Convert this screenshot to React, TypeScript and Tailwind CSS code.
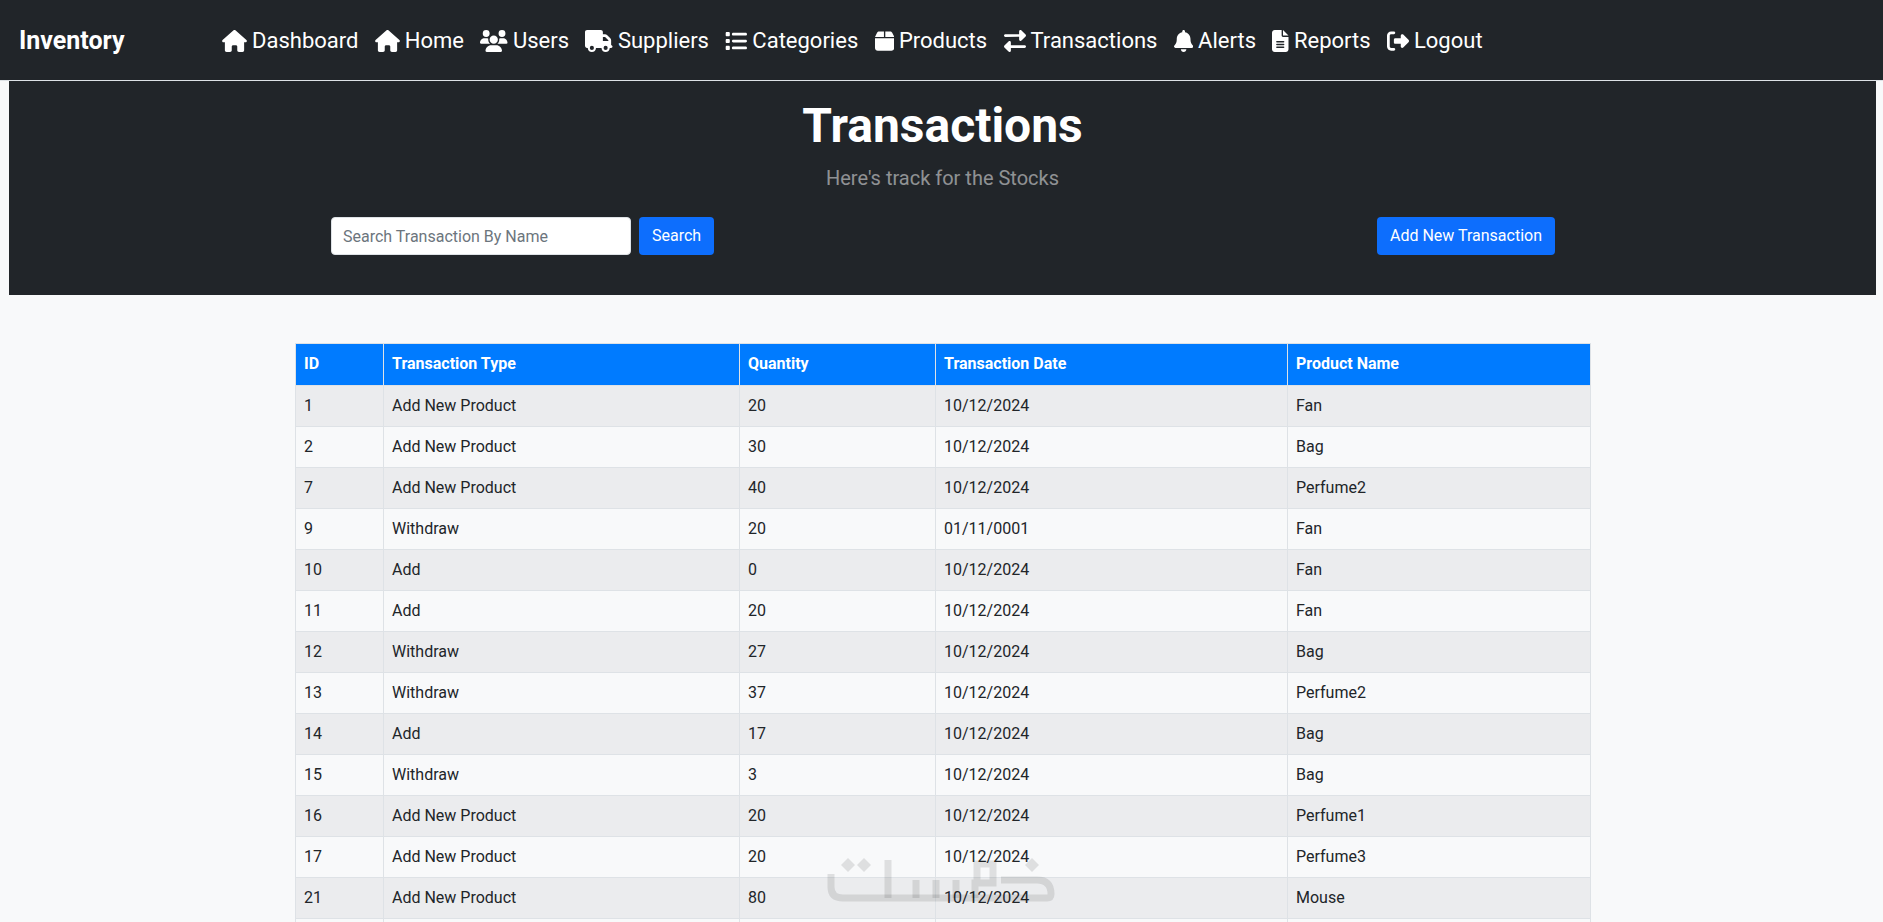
import { FaHouse, FaUsers, FaTruck, FaList, FaBox, FaRightLeft, FaBell, FaFileLines, FaRightFromBracket } from "react-icons/fa6";

const nav = [
  { label: "Dashboard", Icon: FaHouse, w: "w-[25px]" },
  { label: "Home", Icon: FaHouse, w: "w-[25px]" },
  { label: "Users", Icon: FaUsers, w: "w-[27.5px]" },
  { label: "Suppliers", Icon: FaTruck, w: "w-[27.5px]" },
  { label: "Categories", Icon: FaList, w: "w-[22px]" },
  { label: "Products", Icon: FaBox, w: "w-[19.25px]" },
  { label: "Transactions", Icon: FaRightLeft, w: "w-[22px]" },
  { label: "Alerts", Icon: FaBell, w: "w-[19.25px]" },
  { label: "Reports", Icon: FaFileLines, w: "w-[16.5px]" },
  { label: "Logout", Icon: FaRightFromBracket, w: "w-[22px]" },
];

const rows = [
  ["1", "Add New Product", "20", "10/12/2024", "Fan"],
  ["2", "Add New Product", "30", "10/12/2024", "Bag"],
  ["7", "Add New Product", "40", "10/12/2024", "Perfume2"],
  ["9", "Withdraw", "20", "01/11/0001", "Fan"],
  ["10", "Add", "0", "10/12/2024", "Fan"],
  ["11", "Add", "20", "10/12/2024", "Fan"],
  ["12", "Withdraw", "27", "10/12/2024", "Bag"],
  ["13", "Withdraw", "37", "10/12/2024", "Perfume2"],
  ["14", "Add", "17", "10/12/2024", "Bag"],
  ["15", "Withdraw", "3", "10/12/2024", "Bag"],
  ["16", "Add New Product", "20", "10/12/2024", "Perfume1"],
  ["17", "Add New Product", "20", "10/12/2024", "Perfume3"],
  ["21", "Add New Product", "80", "10/12/2024", "Mouse"],
  ["", "", "", "", ""],
];

const heads = ["ID", "Transaction Type", "Quantity", "Transaction Date", "Product Name"];
const widths = ["w-[88px]", "w-[356px]", "w-[196px]", "w-[352px]", "w-[303px]"];

function WatermarkLogo() {
  return (
    <svg
      viewBox="0 0 250 65"
      className="pointer-events-none absolute left-[815px] top-[850px] h-[65px] w-[250px] text-black/10"
      fill="none"
      stroke="currentColor"
      strokeWidth="7"
      aria-hidden="true"
    >
      <g fill="currentColor" stroke="none">
        <path d="M33 8l7 7-7 7-7-7z" />
        <path d="M49 8l7 7-7 7-7-7z" />
        <path d="M217 8l7 7-7 7-7-7z" />
      </g>
      <path d="M16 24V37Q16 48 28 48H232Q236 48 236 44Q236 30 222 30H186" />
      <path d="M73 10V48" />
      <path d="M101 30V48M121 30V48M141 30V48" />
      <path d="M160 48V33H178V14H162V33" />
    </svg>
  );
}

export default function App() {
  return (
    <div className="relative h-[922px] overflow-hidden bg-[#f8f9fa] font-['Roboto',sans-serif] text-[#212529]">
      <nav className="flex h-[81px] items-center border-b border-[#dee2e6] bg-[#212529] pl-[19px] pt-[1px] text-white">
        <div className="w-[203px] text-[25px] font-bold">Inventory</div>
        <div className="flex gap-[16.4px]">
          {nav.map(({ label, Icon, w }) => (
            <div key={label} className="flex items-center gap-[5px] text-[22px] leading-[32px]">
              <Icon className={`h-[22px] shrink-0 ${w}`} />
              <span>{label}</span>
            </div>
          ))}
        </div>
      </nav>
      <header className="ml-[9px] mr-[7px] h-[214px] bg-[#212529] pt-[16px] text-center">
        <h1 className="text-[48px] font-bold leading-[58px] text-white">Transactions</h1>
        <p className="mt-[8px] text-[20px] leading-[30px] text-white/50">Here's track for the Stocks</p>
        <div className="mt-[24px] flex justify-between pl-[322px] pr-[321px]">
          <div className="flex gap-[8px]">
            <input
              readOnly
              placeholder="Search Transaction By Name"
              className="h-[38px] w-[300px] rounded-[4px] border border-[#dee2e6] bg-white px-[11px] text-[16px] placeholder:text-[#6c757d]"
            />
            <button className="h-[38px] rounded-[4px] bg-[#0d6efd] px-[13px] text-[16px] text-white">Search</button>
          </div>
          <button className="h-[38px] rounded-[4px] bg-[#0d6efd] px-[13px] text-[16px] text-white">Add New Transaction</button>
        </div>
      </header>
      <main className="pl-[295px] pt-[48px]">
        <table className="table-fixed border-collapse text-[16px]">
          <thead>
            <tr className="h-[42px] bg-[#007bff] text-left text-white">
              {heads.map((h, i) => (
                <th key={h} className={`${widths[i]} border border-[#dee2e6] px-[8px] pb-[1px] font-bold`}>{h}</th>
              ))}
            </tr>
          </thead>
          <tbody>
            {rows.map((r, i) => (
              <tr key={i} className={`h-[41px] ${i % 2 === 0 ? "bg-[#ebecee]" : "bg-[#f8f9fa]"}`}>
                {r.map((c, j) => (
                  <td key={j} className="border border-[#dee2e6] px-[8px]">{c}</td>
                ))}
              </tr>
            ))}
          </tbody>
        </table>
      </main>
      <WatermarkLogo />
    </div>
  );
}
